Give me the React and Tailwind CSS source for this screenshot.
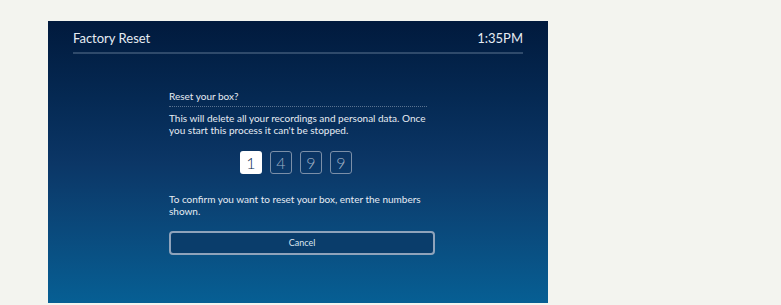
import React from "react";

const digits = ["1", "4", "9", "9"];

export default function App() {
  return (
    <div
      className="w-[781px] h-[305px] bg-[#f3f4ef] pt-[21px] pl-[48px]"
      style={{ fontFamily: 'Lato, "Open Sans", sans-serif' }}
    >
      <div className="w-[500px] h-[282px] bg-gradient-to-b from-[#011a3d] via-[#0b3666] to-[#065f94] px-[25px] text-[#e6ecf3]">
        <div className="flex items-end justify-between h-[33px] pb-[7px] border-b-2 border-[#2f4a6b] text-[13px] leading-none">
          <span>Factory Reset</span>
          <span>1:35PM</span>
        </div>

        <div className="ml-[96px] w-[266px] pt-[36px]">
          <div className="text-[10px] leading-[12px] pb-[4px] border-b border-dotted border-[#5a7391] w-[258px]">
            Reset your box?
          </div>
          <p className="mt-[5px] text-[10px] leading-[12px] whitespace-nowrap">
            This will delete all your recordings and personal data. Once
            <br />
            you start this process it can't be stopped.
          </p>

          <div className="flex gap-[8px] mt-[15px] ml-[71px]">
            {digits.map((d, i) => (
              <div
                key={i}
                className={
                  i === 0
                    ? "w-[22px] h-[23px] rounded-[3px] bg-white text-[#0a2a4f] flex items-center justify-center text-[16px] font-light"
                    : "w-[22px] h-[23px] rounded-[3px] border border-[#7b8fa8] text-[#9fb0c4] flex items-center justify-center text-[16px] font-light"
                }
              >
                {d}
              </div>
            ))}
          </div>

          <p className="mt-[19px] text-[10px] leading-[12px] whitespace-nowrap">
            To confirm you want to reset your box, enter the numbers
            <br />
            shown.
          </p>

          <button className="mt-[14px] w-[266px] h-[24px] rounded-[4px] border-2 border-[#8fa3bb] bg-[#0a3d6b] text-[9px] text-[#dbe4ee] flex items-center justify-center">
            Cancel
          </button>
        </div>
      </div>
    </div>
  );
}
